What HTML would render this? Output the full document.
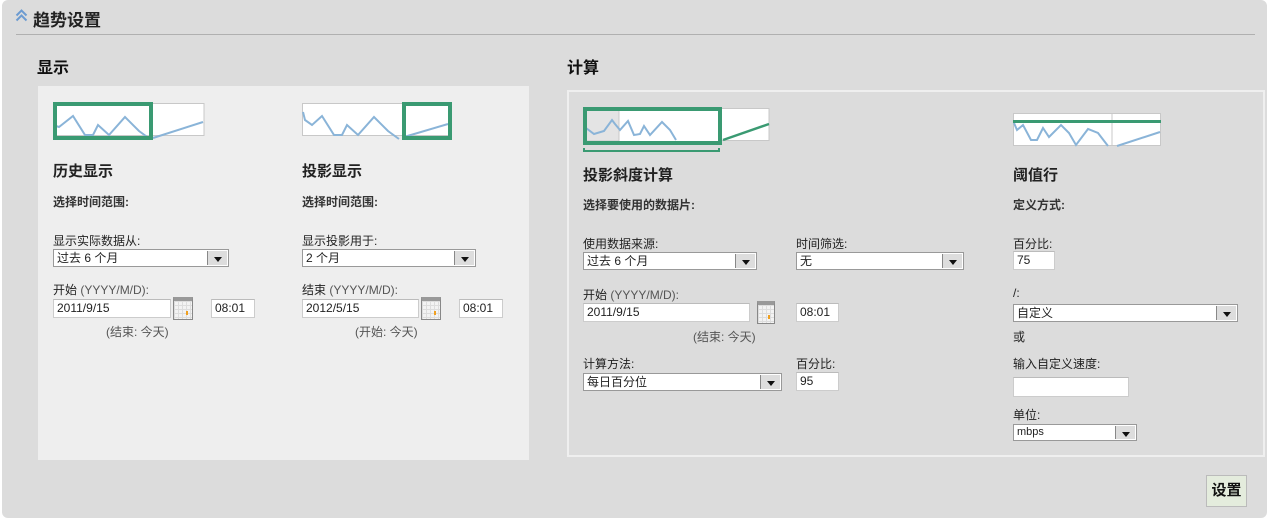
<!DOCTYPE html>
<html><head><meta charset="utf-8"><style>
*{margin:0;padding:0;box-sizing:border-box}
body{width:1269px;height:521px;background:#fff;font-family:"Liberation Sans","Noto Sans CJK SC",sans-serif;font-size:12px;color:#222;position:relative;overflow:hidden}
.a{position:absolute;white-space:nowrap}
#outer{position:absolute;left:2px;top:0;width:1265px;height:518px;background:#dcdcdc;border-radius:6px}
.h2{font-size:16px;font-weight:bold;color:#111}
.h3{font-size:15px;font-weight:bold;color:#222}
.b{font-weight:bold;color:#333;font-size:12px}
.inp{position:absolute;background:#fff;border:1px solid #ccc;border-top-color:#bbb;padding:2px 3px;font-size:12px;line-height:13px}
.sel{position:absolute;background:#fff;border:1px solid #999;font-size:12px;line-height:16px;padding-left:3px}
.sel i{position:absolute;right:1px;top:1px;bottom:1px;width:20px;background:#ddd;border-left:1px solid #888}
.sel i:after{content:"";position:absolute;left:6px;top:6px;border-left:4px solid transparent;border-right:4px solid transparent;border-top:5px solid #111}
.cal{position:absolute;width:20px;height:23px;background:#f3f3f3;border:1px solid #888;border-top:4px solid #999;
background-image:linear-gradient(#ddd 1px,transparent 1px),linear-gradient(90deg,#ddd 1px,transparent 1px);background-size:4px 4px}
.cal:after{content:"";position:absolute;right:4px;bottom:4px;width:2px;height:4px;background:#f0a020}
.g{color:#555}
</style></head><body>
<div id="outer"></div>
<svg class="a" style="left:15px;top:9px" width="13" height="13"><path d="M1.5 6.5L6.5 1.5L11.5 6.5M1.5 11.5L6.5 6.5L11.5 11.5" stroke="#6c9bd1" stroke-width="2" fill="none"/></svg>
<div class="a" style="left:33px;top:6px;font-size:17px;font-weight:bold;color:#222">趋势设置</div>
<div class="a" style="left:16px;top:34px;width:1239px;height:1px;background:#b0b0b0"></div>
<div class="a h2" style="left:37px;top:54px">显示</div>
<div class="a h2" style="left:567px;top:54px">计算</div>

<div class="a" style="left:38px;top:86px;width:491px;height:374px;background:#eeeeee"></div>
<svg class="a" style="left:53px;top:102px" width="152" height="38">
<rect x="1" y="1.5" width="150" height="32" fill="#fff" stroke="#c8c8c8"/>
<polyline points="3,24 6,25 20,14 32,33 40,33 45,23 56,33 72,15 86,29 97,37" stroke="#8ab4d8" stroke-width="2" fill="none"/>
<polyline points="100,36 150,20" stroke="#8ab4d8" stroke-width="2" fill="none"/>
<rect x="2" y="2" width="96" height="34" fill="none" stroke="#3a9a72" stroke-width="4"/>
</svg>
<svg class="a" style="left:302px;top:102px" width="150" height="38">
<rect x="0.5" y="1.5" width="148" height="32" fill="#fff" stroke="#c8c8c8"/>
<polyline points="1,10 3,18 10,23 20,14 32,33 40,33 45,23 56,33 72,15 86,29 97,37" stroke="#8ab4d8" stroke-width="2" fill="none"/>
<polyline points="102,35 146,22" stroke="#8ab4d8" stroke-width="2" fill="none"/>
<rect x="102" y="2" width="46" height="34" fill="none" stroke="#3a9a72" stroke-width="4"/>
</svg>
<div class="a h3" style="left:53px;top:160px">历史显示</div>
<div class="a h3" style="left:302px;top:160px">投影显示</div>
<div class="a b" style="left:53px;top:193px">选择时间范围:</div>
<div class="a b" style="left:302px;top:193px">选择时间范围:</div>
<div class="a" style="left:53px;top:232px">显示实际数据从:</div>
<div class="a" style="left:302px;top:232px">显示投影用于:</div>
<div class="sel" style="left:53px;top:249px;width:176px;height:18px">过去 6 个月<i></i></div>
<div class="sel" style="left:302px;top:249px;width:174px;height:18px">2 个月<i></i></div>
<div class="a" style="left:53px;top:281px">开始 <span class="g">(YYYY/M/D):</span></div>
<div class="a" style="left:302px;top:281px">结束 <span class="g">(YYYY/M/D):</span></div>
<div class="inp" style="left:53px;top:299px;width:118px;height:19px">2011/9/15</div>
<div class="cal" style="left:173px;top:297px"></div>
<div class="inp" style="left:211px;top:299px;width:44px;height:19px">08:01</div>
<div class="inp" style="left:302px;top:299px;width:117px;height:19px">2012/5/15</div>
<div class="cal" style="left:421px;top:297px"></div>
<div class="inp" style="left:459px;top:299px;width:44px;height:19px">08:01</div>
<div class="a g" style="left:106px;top:323px">(结束: 今天)</div>
<div class="a g" style="left:355px;top:323px">(开始: 今天)</div>

<div class="a" style="left:567px;top:90px;width:698px;height:367px;border:2px solid #efefef"></div>
<svg class="a" style="left:582px;top:106px" width="190" height="47">
<rect x="136" y="2.5" width="51" height="32" fill="#fff" stroke="#c8c8c8"/>
<rect x="3" y="3" width="135" height="32" fill="#fff"/>
<rect x="3" y="3" width="34" height="32" fill="#e4e4e4" stroke="#c8c8c8"/>
<polyline points="4,22 12,28 22,25 30,14 33,18 38,24 46,15 52,29 58,28 62,20 68,29 80,16 88,24 94,34" stroke="#8ab4d8" stroke-width="2" fill="none"/>
<polyline points="141,34 187,18" stroke="#3a9a72" stroke-width="2.5" fill="none"/>
<rect x="3" y="3" width="135" height="34" fill="none" stroke="#3a9a72" stroke-width="4"/>
<polyline points="2,42 2,45 137,45 137,42" stroke="#3a9a72" stroke-width="2" fill="none"/>
</svg>
<svg class="a" style="left:1013px;top:113px" width="149" height="34">
<rect x="0.5" y="0.5" width="147" height="32" fill="#fff" stroke="#c8c8c8"/>
<line x1="99" y1="0" x2="99" y2="33" stroke="#c8c8c8"/>
<polyline points="1,10 4,17 10,12 18,27 24,27 30,15 36,24 48,12 56,20 63,32 75,16 85,20 95,33" stroke="#8ab4d8" stroke-width="2" fill="none"/>
<polyline points="104,33 147,19" stroke="#8ab4d8" stroke-width="2" fill="none"/>
<rect x="0" y="7" width="148" height="3" fill="#3a9a72"/>
</svg>
<div class="a h3" style="left:583px;top:164px">投影斜度计算</div>
<div class="a h3" style="left:1013px;top:164px">阈值行</div>
<div class="a b" style="left:583px;top:196px">选择要使用的数据片:</div>
<div class="a b" style="left:1013px;top:196px">定义方式:</div>
<div class="a" style="left:583px;top:235px">使用数据来源:</div>
<div class="a" style="left:796px;top:235px">时间筛选:</div>
<div class="a" style="left:1013px;top:235px">百分比:</div>
<div class="sel" style="left:583px;top:252px;width:174px;height:18px">过去 6 个月<i></i></div>
<div class="sel" style="left:796px;top:252px;width:168px;height:18px">无<i></i></div>
<div class="inp" style="left:1013px;top:251px;width:42px;height:19px">75</div>
<div class="a" style="left:583px;top:286px">开始 <span class="g">(YYYY/M/D):</span></div>
<div class="a" style="left:1013px;top:286px">/:</div>
<div class="inp" style="left:583px;top:303px;width:167px;height:19px">2011/9/15</div>
<div class="cal" style="left:757px;top:301px;width:18px"></div>
<div class="inp" style="left:796px;top:303px;width:43px;height:19px">08:01</div>
<div class="sel" style="left:1013px;top:304px;width:225px;height:18px">自定义<i></i></div>
<div class="a" style="left:1013px;top:328px">或</div>
<div class="a g" style="left:693px;top:328px">(结束: 今天)</div>
<div class="a" style="left:583px;top:355px">计算方法:</div>
<div class="a" style="left:796px;top:355px">百分比:</div>
<div class="a" style="left:1013px;top:355px">输入自定义速度:</div>
<div class="sel" style="left:583px;top:373px;width:199px;height:18px">每日百分位<i></i></div>
<div class="inp" style="left:796px;top:372px;width:43px;height:19px">95</div>
<div class="inp" style="left:1013px;top:377px;width:116px;height:20px"></div>
<div class="a" style="left:1013px;top:406px">单位:</div>
<div class="sel" style="left:1013px;top:424px;width:124px;height:17px;font-size:11px;line-height:15px">mbps<i></i></div>

<div class="a" style="left:1206px;top:475px;width:41px;height:32px;background:#e4ecdd;border:1px solid #bbb;font-size:15px;font-weight:bold;text-align:center;line-height:30px;color:#111">设置</div>
</body></html>
